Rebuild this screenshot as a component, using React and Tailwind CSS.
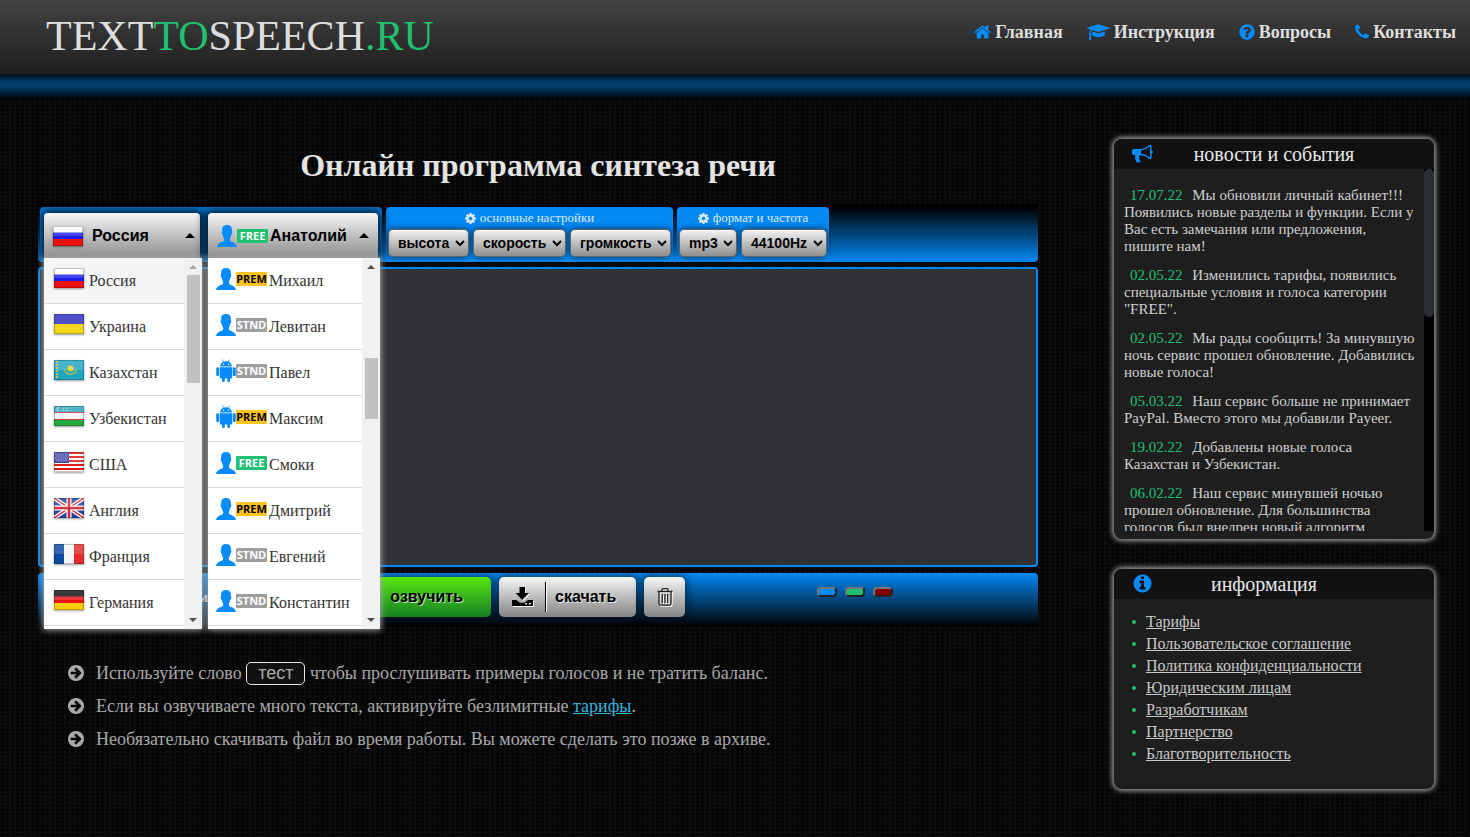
import React from "react";

const CIRCLE =
  "M1664 896q0 209-103 385.500t-279.500 279.500-385.500 103-385.500-103-279.500-279.500-103-385.500 103-385.500 279.500-279.500 385.500-103 385.500 103 279.500 279.500 103 385.500z";

const PATHS = {
  home: "M1472 992v480q0 26-19 45t-45 19h-384v-384h-256v384h-384q-26 0-45-19t-19-45v-480q0-1 .5-3t.5-3l575-474 575 474q1 2 1 6zm223-69l-62 74q-8 9-21 11h-3q-13 0-21-7l-692-577-692 577q-12 8-24 7-13-2-21-11l-62-74q-8-10-7-23.500t11-21.500l719-599q32-26 76-26t76 26l244 204v-195q0-14 9-23t23-9h192q14 0 23 9t9 23v408l219 182q10 8 11 21.500t-7 23.500z",
  cap: "M1774 836l18 316q4 69-82 128t-235 93.500-323 34.500-323-34.500-235-93.500-82-128l18-316 574 181q22 7 48 7t48-7zm530-324q0 23-22 31l-1120 352q-4 1-10 1t-10-1l-652-206q-43 34-71 111.500t-34 178.500q63 36 63 109 0 69-58 107l58 433q2 14-8 25-9 11-24 11h-192q-15 0-24-11-10-11-8-25l58-433q-58-38-58-107 0-73 65-111 11-207 98-330l-333-104q-22-8-22-31t22-31l1120-352q4-1 10-1t10 1l1120 352q22 8 22 31z",
  question:
    "M1024 1376v-192q0-14-9-23t-23-9h-192q-14 0-23 9t-9 23v192q0 14 9 23t23 9h192q14 0 23-9t9-23zm256-672q0-88-55.500-163t-138.500-116-170-41q-243 0-371 213-15 24 8 42l132 100q7 6 19 6 16 0 25-12 53-68 86-92 34-24 86-24 48 0 85.500 26t37.500 59q0 38-20 61t-68 45q-63 28-115.500 86.500t-52.500 125.500v36q0 14 9 23t23 9h192q14 0 23-9t9-23q0-19 21.500-49.500t54.500-49.500q32-18 49-28.500t46-35 44.500-48 28-60.500 12.500-81z" +
    CIRCLE,
  phone:
    "M1600 1240q0 27-10 70.500t-21 68.500q-21 50-122 106-94 51-186 51-27 0-53-3.500t-57.500-12.500-47-14.500-55.500-20.500-49-18q-98-35-175-83-127-79-264-216t-216-264q-48-77-83-175-3-9-18-49t-20.500-55.500-14.500-47-12.500-57.500-3.500-53q0-92 51-186 56-101 106-122 25-11 68.500-21t70.500-10q14 0 21 3 18 6 53 76 11 19 30 54t35 63.500 31 53.500q3 4 17.500 25t21.500 35.500 7 28.500q0 20-28.500 50t-62 55-62 53-28.500 46q0 9 5 22.500t8.500 20.500 14 24 11.500 19q76 137 174 235t235 174q2 1 19 11.500t24 14 20.500 8.500 22.500 5q18 0 46-28.500t53-62 55-62 50-28.500q14 0 28.500 7t35.500 21.500 25 17.500q25 15 53.500 31t63.500 35 54 30q70 35 76 53 3 7 3 21z",
  bullhorn:
    "M1664 640q53 0 90.500 37.500t37.500 90.500-37.500 90.500-90.500 37.500v384q0 52-38 90t-90 38q-417-347-812-380-58 19-91 66t-31 100.500 40 92.500q-20 33-23 65.500t6 58 33.500 55 48 50 61.500 50.500q-29 58-111.500 83t-168.500 11.500-132-55.500q-7-23-29.500-87.500t-32-94.500-23-89-15-101 3.500-98.500 22-110.500h-122q-66 0-113-47t-47-113v-192q0-66 47-113t113-47h480q435 0 896-384 52 0 90 38t38 90v384zm-128 604v-954q-394 302-768 343v270q377 42 768 341z",
  info:
    "M1152 1376v-160q0-14-9-23t-23-9h-96v-512q0-14-9-23t-23-9h-320q-14 0-23 9t-9 23v160q0 14 9 23t23 9h96v320h-96q-14 0-23 9t-9 23v160q0 14 9 23t23 9h448q14 0 23-9t9-23zm-128-896v-160q0-14-9-23t-23-9h-192q-14 0-23 9t-9 23v160q0 14 9 23t23 9h192q14 0 23-9t9-23z" +
    CIRCLE,
  arrow:
    "M1413 896q0-27-18-45l-91-91-362-362q-18-18-45-18t-45 18l-91 91q-18 18-18 45t18 45l189 189h-502q-26 0-45 19t-19 45v128q0 26 19 45t45 19h502l-189 189q-18 18-18 45t18 45l91 91q18 18 45 18t45-18l362-362 91-91q18-18 18-45z" +
    CIRCLE,
  cog: "M1152 896q0-106-75-181t-181-75-181 75-75 181 75 181 181 75 181-75 75-181zm512-109v222q0 12-8 23t-20 13l-185 28q-19 54-39 91 35 50 107 138 10 12 10 25t-9 23q-27 37-99 108t-94 71q-12 0-26-9l-138-108q-44 23-91 38-16 136-29 186-7 28-36 28h-222q-14 0-24.500-8.500t-11.500-21.500l-28-184q-49-16-90-37l-141 107q-10 9-25 9-14 0-25-11-126-114-165-168-7-10-7-23 0-12 8-23 15-21 51-66.500t54-70.500q-27-50-41-99l-183-27q-13-2-21-12.500t-8-23.500v-222q0-12 8-23t19-13l186-28q14-46 39-92-40-57-107-138-10-12-10-24 0-10 9-23 26-36 98.500-107.500t94.500-71.500q13 0 26 10l138 107q44-23 91-38 16-136 29-186 7-28 36-28h222q14 0 24.500 8.500t11.500 21.500l28 184q49 16 90 37l142-107q9-9 24-9 13 0 25 10 129 119 165 170 7 8 7 22 0 12-8 23-15 21-51 66.500t-54 70.500q26 50 41 98l183 28q13 2 21 12.500t8 23.500z",
};

function Icon({ name, className, box = "0 0 1792 1792" }) {
  return (
    <svg viewBox={box} className={className} fill="currentColor" fillRule="evenodd" aria-hidden="true">
      <path d={PATHS[name]} />
    </svg>
  );
}

const FLAGS = {
  ru: (
    <>
      <path fill="#fff" d="M0 0h30v7H0z" />
      <path fill="#1f1fe8" d="M0 6.500h30v7H0z" />
      <path fill="#f01010" d="M0 13h30v7H0z" />
    </>
  ),
  ua: (
    <>
      <path fill="#2e2ec0" d="M0 0h30v10H0z" />
      <path fill="#f0d61c" d="M0 10h30v10H0z" />
    </>
  ),
  kz: (
    <>
      <path fill="#1fa6c0" d="M0 0h30v20H0z" />
      <path stroke="#c3bb4c" strokeWidth="2" strokeDasharray="2 1" d="M3 1v18" />
      <circle cx="16.500" cy="8.500" r="3" fill="#f4cf2a" />
      <path fill="none" stroke="#9dba62" strokeWidth="1.500" d="M10.500 9q1 5 6 5t6-5" />
    </>
  ),
  uz: (
    <>
      <path fill="#2fa5bd" d="M0 0h30v7H0z" />
      <path fill="#f4f4f4" d="M0 6h30v8H0z" />
      <path fill="#22a83c" d="M0 13.500h30V20H0z" />
      <path fill="#d4304a" d="M0 6h30v1H0zM0 13h30v1H0z" />
      <path fill="none" stroke="#c4e6ee" d="M5 1.500q-2 0-2 1.500t2 1.500" />
      <path stroke="#8fcfdc" strokeDasharray="1 1" d="M7 4.500h8M9 2.500h6" />
    </>
  ),
  us: (
    <>
      <path fill="#fff" d="M0 0h30v20H0z" />
      <path fill="#e01818" d="M0 0h30v2H0zM0 4h30v2H0zM0 8h30v2H0zM0 12h30v2H0zM0 16h30v2H0z" />
      <path fill="#3a3f9e" d="M0 0h15v11H0z" />
      <path stroke="#a9acd8" strokeDasharray="1 1.500" d="M1 2h13M2 4h12M1 6h13M2 8h12" />
    </>
  ),
  gb: (
    <>
      <path fill="#2446a0" d="M0 0h30v20H0z" />
      <path stroke="#fff" strokeWidth="4" d="M0 0l30 20M30 0L0 20" />
      <path stroke="#d42032" strokeWidth="1.400" d="M0 0l30 20M30 0L0 20" />
      <path stroke="#fff" strokeWidth="5" d="M15 0v20M0 10h30" />
      <path stroke="#d42032" strokeWidth="2.500" d="M15 0v20M0 10h30" />
    </>
  ),
  fr: (
    <>
      <path fill="#0c4aa0" d="M0 0h10v20H0z" />
      <path fill="#f6f6f6" d="M10 0h10v20H10z" />
      <path fill="#e42c2c" d="M20 0h10v20H20z" />
    </>
  ),
  de: (
    <>
      <path fill="#151515" d="M0 0h30v7H0z" />
      <path fill="#e81414" d="M0 6.500h30v7H0z" />
      <path fill="#fccc08" d="M0 13h30v7H0z" />
    </>
  ),
};

function Flag({ code }) {
  return (
    <svg viewBox="0 0 30 20" className="h-5 w-[30px] shrink-0 shadow-[0_1px_2px_rgba(0,0,0,0.4)]" aria-hidden="true">
      {FLAGS[code]}
      <path fill="#fff" fillOpacity=".16" d="M0 0h30v10H0z" />
      <path fill="none" stroke="#000" strokeOpacity=".22" d="M.5.5h29v19H.5z" />
    </svg>
  );
}

function Person() {
  return (
    <svg viewBox="0 0 20 22" className="h-[22px] w-5 shrink-0" fill="#058bfa" aria-hidden="true">
      <path d="M10 0C6.800 0 5 1.800 5.100 5v1.200c-.6.300-.5 1.300-.2 2.300.2.800.5 1.300.9 1.400.2 1.600.7 2.700 1.300 3.500v2.200c-.6 1.900-6.300 1.600-7.100 6.400h20c-.8-4.800-6.500-4.500-7.100-6.400v-2.200c.6-.8 1.100-1.900 1.300-3.500.4-.1.700-.6.900-1.400.3-1 .4-2-.2-2.300V5C15 1.800 13.200 0 10 0z" />
    </svg>
  );
}

function Robot() {
  return (
    <svg viewBox="0 0 20 23" className="h-[23px] w-5 shrink-0" fill="#058bfa" aria-hidden="true">
      <path d="M4.200 7.500c0-2.300 1.400-3.900 3.200-4.700L6 .6l.4-.3 1.600 2.300a7.200 7.200 0 0 1 4 0L13.600.3l.4.3-1.400 2.200c1.800.8 3.200 2.400 3.200 4.700zM7.500 4.600a.7.700 0 1 0 0 1.400.7.700 0 0 0 0-1.400zm5 0a.7.700 0 1 0 0 1.400.7.700 0 0 0 0-1.400z" fillRule="evenodd" />
      <path d="M3.700 8.300h12.600v9.900c0 .8-.5 1.300-1.300 1.300h-1V21.700a1.400 1.400 0 0 1-2.800 0V19.500H8.800v2.200a1.400 1.400 0 0 1-2.800 0V19.500H5c-.8 0-1.300-.5-1.300-1.300z" />
      <rect x=".2" y="8.200" width="2.900" height="9" rx="1.400" />
      <rect x="16.900" y="8.200" width="2.900" height="9" rx="1.400" />
    </svg>
  );
}

const BADGES = {
  FREE: "bg-[#20c073] text-white",
  PREM: "bg-[#fec31f] text-black",
  STND: "bg-[#9e9e9e] text-white",
};

function Badge({ kind }) {
  return (
    <span
      className={
        "flex h-[14px] w-[31px] shrink-0 items-center justify-center rounded-[1px] font-['Open_Sans',sans-serif] text-[11px] leading-[14px] font-bold " +
        BADGES[kind]
      }
    >
      {kind}
    </span>
  );
}

function Triangle({ down, className }) {
  return (
    <svg viewBox="0 0 10 5" className={className} fill="currentColor" aria-hidden="true">
      <path d={down ? "M0 0h10L5 5z" : "M0 5h10L5 0z"} />
    </svg>
  );
}

const COUNTRIES = [
  ["ru", "Россия"],
  ["ua", "Украина"],
  ["kz", "Казахстан"],
  ["uz", "Узбекистан"],
  ["us", "США"],
  ["gb", "Англия"],
  ["fr", "Франция"],
  ["de", "Германия"],
];

const VOICES = [
  ["p", "PREM", "Михаил"],
  ["p", "STND", "Левитан"],
  ["r", "STND", "Павел"],
  ["r", "PREM", "Максим"],
  ["p", "FREE", "Смоки"],
  ["p", "PREM", "Дмитрий"],
  ["p", "STND", "Евгений"],
  ["p", "STND", "Константин"],
];

const SELECT_BTN =
  "flex h-[45px] w-full items-center rounded-t-[4px] bg-linear-to-b from-[#f8f8f8] to-[#8c8c8c] px-[9px] font-['Liberation_Sans',Arial,sans-serif] text-base font-bold text-black shadow-[0_0_10px_4px_rgba(0,0,0,0.8)]";
const MENU =
  "absolute top-full left-0 z-10 flex h-[371px] overflow-hidden bg-white shadow-[0_0_6px_1px_#a8a8a8]";

const NEWS = [
  ["17.07.22", "Мы обновили личный кабинет!!! Появились новые разделы и функции. Если у Вас есть замечания или предложения, пишите нам!"],
  ["02.05.22", "Изменились тарифы, появились специальные условия и голоса категории \"FREE\"."],
  ["02.05.22", "Мы рады сообщить! За минувшую ночь сервис прошел обновление. Добавились новые голоса!"],
  ["05.03.22", "Наш сервис больше не принимает PayPal. Вместо этого мы добавили Payeer."],
  ["19.02.22", "Добавлены новые голоса Казахстан и Узбекистан."],
  ["06.02.22", "Наш сервис минувшей ночью прошел обновление. Для большинства голосов был внедрен новый алгоритм"],
];

const INFO = [
  "Тарифы",
  "Пользовательское соглашение",
  "Политика конфиденциальности",
  "Юридическим лицам",
  "Разработчикам",
  "Партнерство",
  "Благотворительность",
];

const NAV = [
  ["home", "Главная", "64 128 1664 1536", "h-[18px] w-[17px]"],
  ["cap", "Инструкция", "0 0 2304 1792", "h-[18px] w-[23px]"],
  ["question", "Вопросы", "128 0 1536 1792", "h-[18px] w-[16px]"],
  ["phone", "Контакты", "192 0 1408 1792", "h-[18px] w-[14px]"],
];

function Setting({ label, className }) {
  return (
    <select
      aria-label={label}
      className={
        "h-7 rounded-[5px] border border-[#666] bg-linear-to-b from-[#f4f4f4] to-[#8f8f8f] pl-[5px] font-['Liberation_Sans',Arial,sans-serif] text-sm font-bold text-black shadow-[0_0_6px_rgba(0,0,0,0.7)] " +
        className
      }
    >
      <option>{label}</option>
    </select>
  );
}

function SettingsGroup({ title, children }) {
  return (
    <fieldset className="rounded-t-[4px] bg-[#0389f4] px-[2px]">
      <div className="flex h-[22px] items-center justify-center gap-1 text-[13px] text-[#dde8f0]">
        <Icon name="cog" box="128 128 1536 1536" className="h-[11px] w-[11px]" />
        <span>{title}</span>
      </div>
      <div className="flex gap-1">{children}</div>
    </fieldset>
  );
}

function Panel({ icon, title, titleClass = "", children }) {
  return (
    <section className="overflow-hidden rounded-lg bg-[#1e1e1e] shadow-[0_0_5px_2px_#9a9a9a]">
      <header className="relative flex h-[30px] items-center justify-center bg-[#111] text-xl text-[#e8e8e8]">
        <Icon name={icon} className="absolute top-1 left-[18px] h-[21px] w-[21px] text-[#058bfa]" />
        <h2 className={titleClass}>{title}</h2>
      </header>
      {children}
    </section>
  );
}

const ACTION =
  "flex h-10 items-center rounded-[5px] font-['Liberation_Sans',Arial,sans-serif] text-base font-bold text-black text-shadow-[1px_1px_0_rgba(255,255,255,0.7)] shadow-[0_0_8px_2px_rgba(0,0,0,0.5)]";

const PILL =
  "h-[10px] w-5 rounded-[4px] border-2 border-t-[#767676] border-r-[#222] border-b-[#222] border-l-[#767676] ";

export default function App() {
  return (
    <div className="min-h-screen bg-[#0a0a0a] bg-[radial-gradient(circle,rgba(0,0,0,0.7)_0_1px,transparent_2px),radial-gradient(circle,rgba(255,255,255,0.05)_0_1px,transparent_1px),repeating-conic-gradient(#0e0e0e_0_25%,#070707_0_50%)] bg-[size:5px_4px,3px_5px,2px_2px] font-['Liberation_Serif','Times_New_Roman',serif] text-[#dedede]">
      <header>
        <div className="flex h-[74px] items-center justify-between bg-linear-to-b from-[#434343] to-[#1f1f1f] pr-[14px] pb-[2px] pl-[46px]">
          <a href="#" className="text-[42px] leading-none text-[#dedede]">
            TEXT<span className="text-[#20c073]">TO</span>SPEECH<span className="text-[#20c073]">.RU</span>
          </a>
          <nav className="flex gap-6 pb-2 text-lg font-bold">
            {NAV.map(([icon, label, box, size]) => (
              <a key={icon} href="#" className="flex items-center gap-1">
                <Icon name={icon} box={box} className={size + " text-[#058bfa]"} />
                {label}
              </a>
            ))}
          </nav>
        </div>
        <div className="h-[26px] bg-[linear-gradient(#000c16,#003a69_30%,#003f73_45%,#00294b_65%,#000)]" />
      </header>

      <main className="flex gap-[76px] pr-9 pl-[38px]">
        <div className="min-w-0 flex-1 pt-[47px]">
          <h1 className="mb-5 text-center text-[32px] leading-[37px] font-bold text-[#e4e4e4]">
            Онлайн программа синтеза речи
          </h1>

          <div className="flex h-[58px] gap-1 rounded-[4px] bg-linear-to-b/srgb from-black from-5% to-[#0389f4] pt-[3px] pl-[2px]">
            <div className="flex gap-2 rounded-[4px] bg-[#0389f4] px-1 pt-[6px]">
              <div className="relative h-[45px] w-[156px]">
                <button className={SELECT_BTN}>
                  <Flag code="ru" />
                  <span className="ml-[9px]">Россия</span>
                  <Triangle className="-mr-1 ml-auto h-[5px] w-[10px]" />
                </button>
                <div className={MENU + " w-[158px]"}>
                  <ul className="flex-1">
                    {COUNTRIES.map(([code, name], i) => (
                      <li
                        key={code}
                        className={
                          "flex h-[46px] items-center gap-[5px] border-b border-[#dadada] pl-[10px] text-base text-[#333] " +
                          (i === 0 ? "bg-[#f5f5f5]" : "bg-white")
                        }
                      >
                        <span className="pb-[6px]">
                          <Flag code={code} />
                        </span>
                        {name}
                      </li>
                    ))}
                  </ul>
                  <div className="flex w-[18px] flex-col items-center bg-[#f1f1f1] py-[7px] text-[#505050]">
                    <Triangle className="h-1 w-2 text-[#a3a3a3]" />
                    <div className="mt-[6px] h-[108px] w-[13px] bg-[#c1c1c1]" />
                    <Triangle down className="mt-auto h-1 w-2" />
                  </div>
                </div>
              </div>
              <div className="relative h-[45px] w-[170px]">
                <button className={SELECT_BTN}>
                  <Person />
                  <Badge kind="FREE" />
                  <span className="ml-[2px]">Анатолий</span>
                  <Triangle className="ml-auto h-[5px] w-[10px]" />
                </button>
                <div className={MENU + " w-[172px]"}>
                  <ul className="flex-1">
                    {VOICES.map(([type, kind, name]) => (
                      <li key={name} className="flex h-[46px] items-center border-b border-[#dadada] pl-2 text-base text-[#333]">
                        <span className="pb-1">{type === "p" ? <Person /> : <Robot />}</span>
                        <span className="pb-1">
                          <Badge kind={kind} />
                        </span>
                        <span className="ml-[2px]">{name}</span>
                      </li>
                    ))}
                  </ul>
                  <div className="flex w-[18px] flex-col items-center bg-[#f1f1f1] py-[7px] text-[#505050]">
                    <Triangle className="h-1 w-2" />
                    <div className="mt-[89px] h-[61px] w-[13px] bg-[#c1c1c1]" />
                    <Triangle down className="mt-auto h-1 w-2" />
                  </div>
                </div>
              </div>
            </div>
            <SettingsGroup title="основные настройки">
              <Setting label="высота" className="w-[81px]" />
              <Setting label="скорость" className="w-[93px]" />
              <Setting label="громкость" className="w-[101px]" />
            </SettingsGroup>
            <SettingsGroup title="формат и частота">
              <Setting label="mp3" className="w-[58px]" />
              <Setting label="44100Hz" className="w-[86px]" />
            </SettingsGroup>
          </div>

          <textarea
            aria-label="Текст для озвучивания"
            className="mt-[5px] block h-[300px] w-full resize-none rounded-[4px] border-2 border-[#0389f4] bg-[#323136] p-2 outline-none"
          />

          <div className="mt-[6px] flex h-[54px] items-start gap-2 rounded-[4px] bg-linear-to-b/srgb from-[#0389f4] to-black pt-1 pl-[160px]">
            <span className="flex h-10 w-[148px] items-center text-[15px] font-bold">м</span>
            <button className={ACTION + " w-[137px] justify-end bg-linear-to-b from-[#56e808] to-[#15801f] pr-7"}>озвучить</button>
            <button className={ACTION + " w-[137px] bg-linear-to-b from-[#f6f6f6] to-[#858585] pl-[13px]"}>
              <svg viewBox="0 0 21 20" className="h-5 w-[21px] drop-shadow-[1px_1px_0_#fff]" aria-hidden="true">
                <path d="M7.500 0h5.500v6h4l-6.800 7L3.500 6h4z" />
                <path d="M0 13h4.500l3.500 2.700h4.500L16 13h5v6H0zm13 3v1.500h2V16zm4 0v1.500h2V16z" fillRule="evenodd" />
              </svg>
              <span className="ml-3 h-[30px] w-[2px] border-r border-white bg-black" />
              <span className="ml-2">скачать</span>
            </button>
            <button aria-label="Очистить" className={ACTION + " w-[41px] justify-center bg-linear-to-b from-[#f6f6f6] to-[#858585]"}>
              <svg viewBox="0 0 16 18" className="h-[18px] w-4 drop-shadow-[1px_1px_0_#fff]" fill="none" stroke="#222" strokeWidth="1.300" aria-hidden="true">
                <path d="M.5 3.500h15M5 3.500V2q0-1.300 1.300-1.300h3.400Q11 .7 11 2v1.500M2 3.500v12q0 1.700 1.800 1.700h8.400q1.800 0 1.800-1.700v-12M5.300 6v9M8 6v9M10.700 6v9" />
              </svg>
            </button>
            <div className="mt-[10px] ml-[124px] flex gap-2">
              <button aria-label="Синий" className={PILL + "bg-[#058bfa]"} />
              <button aria-label="Зелёный" className={PILL + "bg-[#20c073]"} />
              <button aria-label="Красный" className={PILL + "bg-[#800000]"} />
            </div>
          </div>

          <ul className="mt-[30px] flex flex-col gap-px text-lg leading-8 text-[#a9a9a9]">
            <li className="flex items-center gap-3 pl-[30px]">
              <Icon name="arrow" box="128 128 1536 1536" className="h-4 w-4" />
              <span>
                Используйте слово{" "}
                <span className="inline-block h-[23px] rounded-[5px] border border-[#e8e8e8] bg-[#111] px-[11px] font-['Liberation_Sans',Arial,sans-serif] leading-5">
                  тест
                </span>{" "}
                чтобы прослушивать примеры голосов и не тратить баланс.
              </span>
            </li>
            <li className="flex items-center gap-3 pl-[30px]">
              <Icon name="arrow" box="128 128 1536 1536" className="h-4 w-4" />
              <span>
                Если вы озвучиваете много текста, активируйте безлимитные{" "}
                <a href="#" className="text-[#35b5dc] underline">
                  тарифы
                </a>
                .
              </span>
            </li>
            <li className="flex items-center gap-3 pl-[30px]">
              <Icon name="arrow" box="128 128 1536 1536" className="h-4 w-4" />
              <span>Необязательно скачивать файл во время работы. Вы можете сделать это позже в архиве.</span>
            </li>
          </ul>
        </div>

        <aside className="flex w-80 shrink-0 flex-col gap-[30px] pt-[39px]">
          <Panel icon="bullhorn" title="новости и события">
            <div className="mb-2 flex h-[362px] overflow-hidden">
              <div className="flex flex-1 flex-col gap-3 pt-[18px] pr-[9px] pl-[10px] text-[15px] leading-[17px] text-[#d0d0d0]">
                {NEWS.map(([date, text], i) => (
                  <p key={i}>
                    <time className="px-[6px] text-[#20c073]">{date}</time> {text}
                  </p>
                ))}
              </div>
              <div className="w-[10px] bg-black">
                <div className="h-[148px] rounded-[5px] bg-[#2a2d32]" />
              </div>
            </div>
          </Panel>
          <Panel icon="info" title="информация" titleClass="pr-5">
            <ul className="px-[18px] pt-3 pb-6 text-base leading-[22px] text-[#c8c8c8]">
              {INFO.map((item) => (
                <li key={item} className="flex items-center gap-[10px]">
                  <span className="h-1 w-1 rounded-full bg-[#20c073]" />
                  <a href="#" className="underline">
                    {item}
                  </a>
                </li>
              ))}
            </ul>
          </Panel>
        </aside>
      </main>
    </div>
  );
}
